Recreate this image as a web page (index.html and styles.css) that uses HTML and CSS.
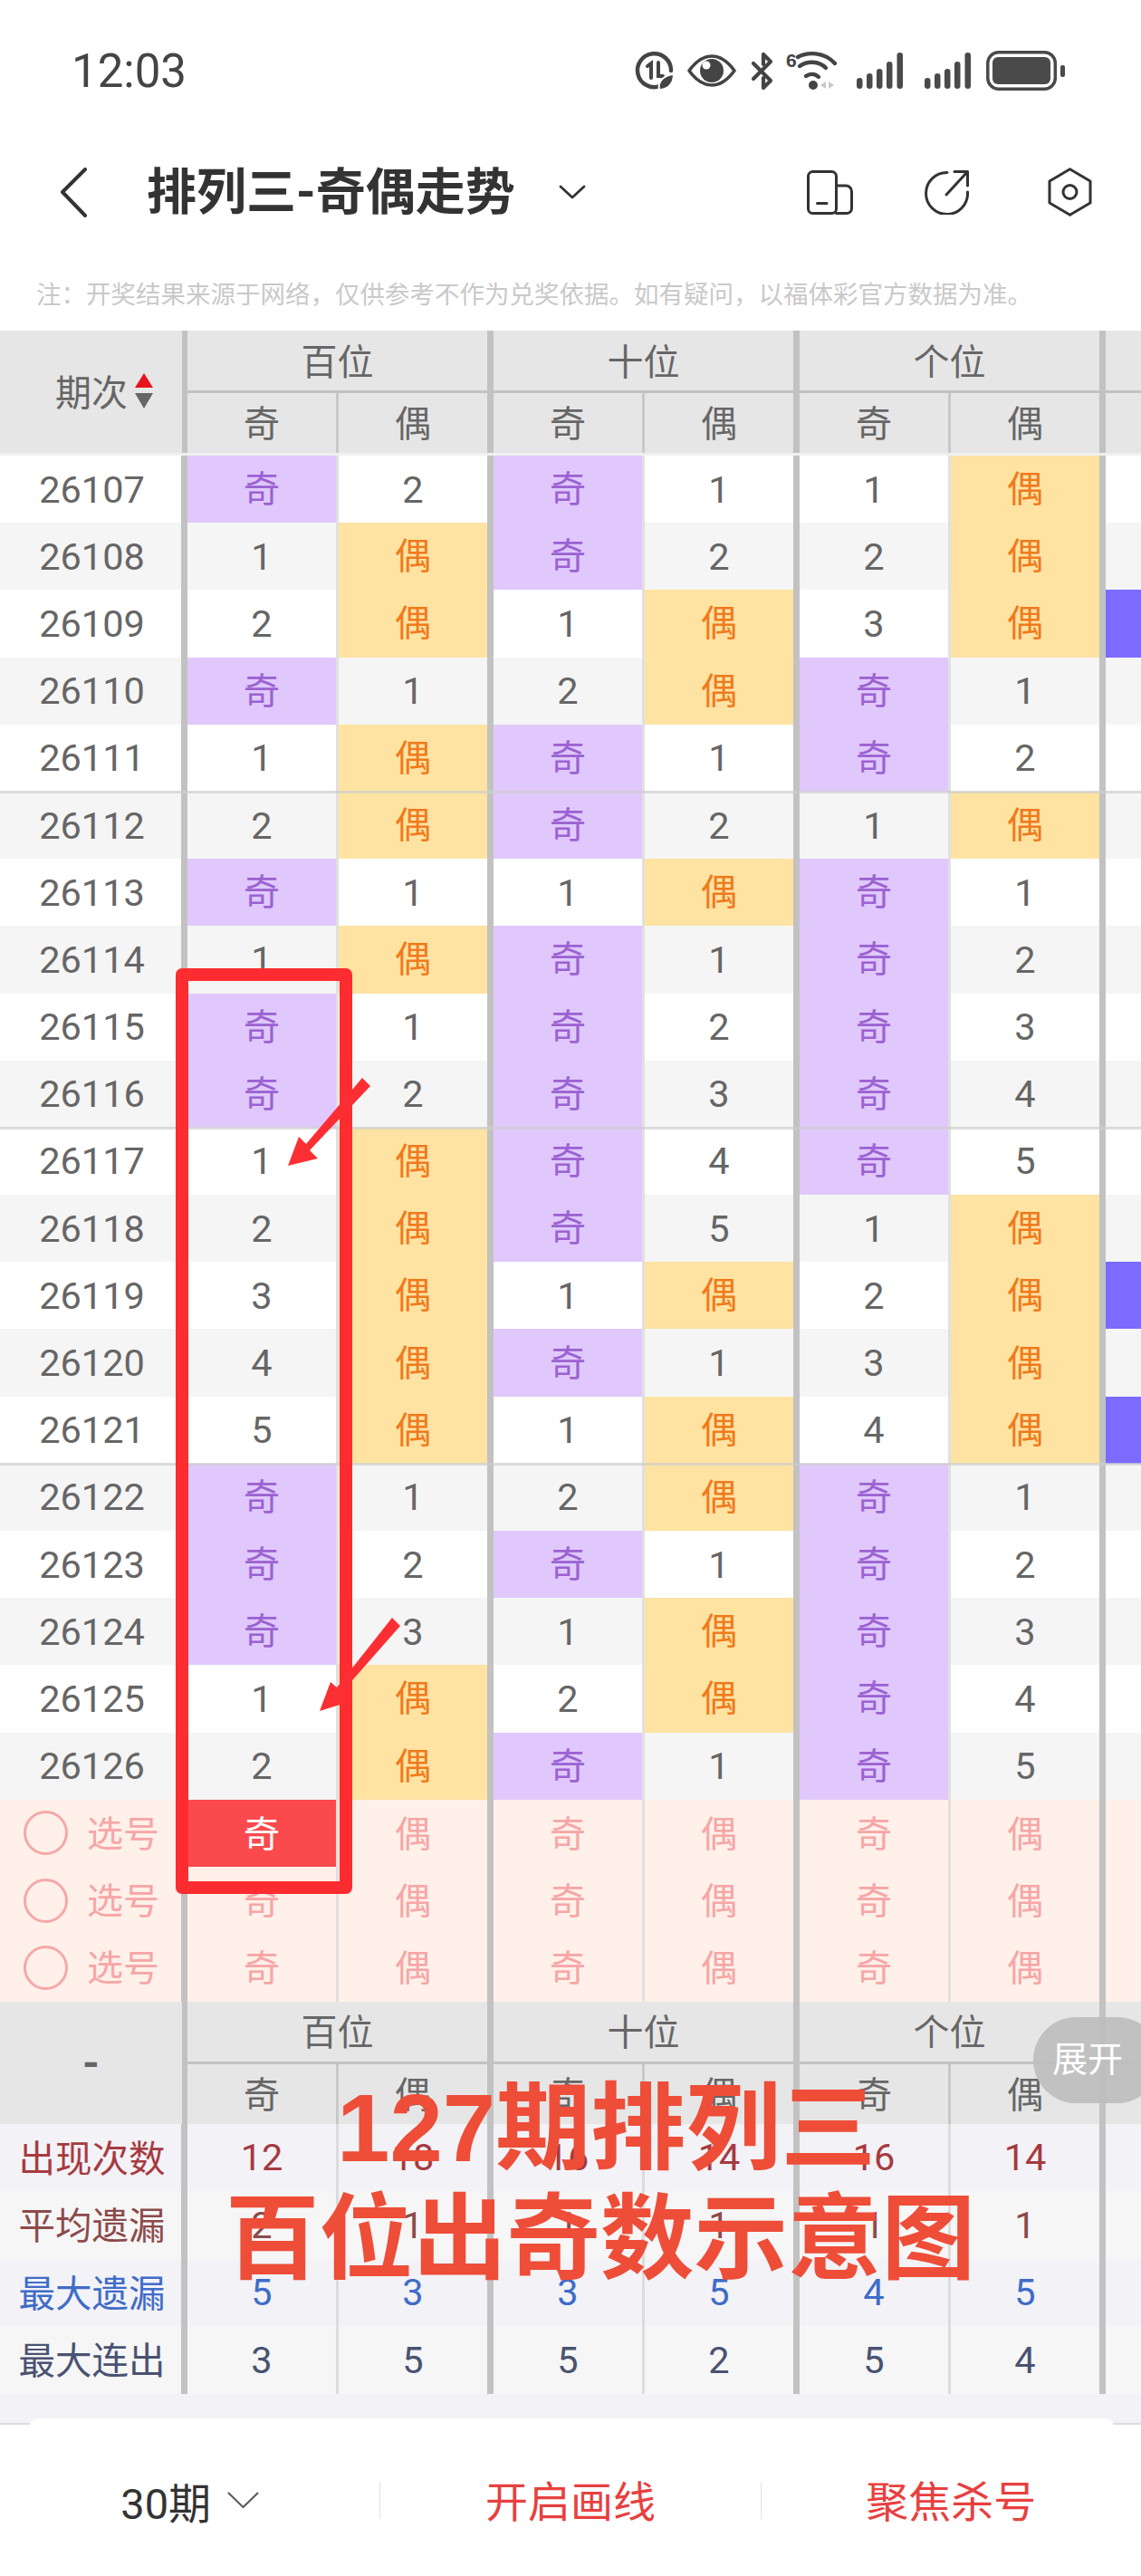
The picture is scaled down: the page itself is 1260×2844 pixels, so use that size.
FILE: index.html
```html
<!DOCTYPE html>
<html lang="zh-CN">
<head>
    <meta charset="UTF-8">
    <meta name="viewport" content="width=device-width, initial-scale=1.0">
    <title>排列三-奇偶走势</title>
    <link rel="stylesheet" href="styles.css">
</head>
<body>
<div class="page">
    <div class="status">
        <span class="time">12:03</span>
        <div class="status-icons">
            <svg class="ic-save" width="42" height="42" viewBox="0 0 42 42" fill="none" stroke="#444" stroke-width="4.5" stroke-linecap="round"><path d="M27 38A18.5 18.5 0 1 1 39 21"/><path d="M13 16l4-3v16" stroke-width="4"/><path d="M25 12v15h5" stroke-width="4"/><path d="M26 42c-2-10 6-16 16-17 0 10-6 17-16 17z" fill="#444" stroke="#fff" stroke-width="2"/></svg>
            <svg class="ic-eye" width="54" height="36" viewBox="0 0 54 36" fill="none"><path d="M2 18C10 7 18 2 27 2s17 5 25 16c-8 11-16 16-25 16S10 29 2 18z" stroke="#444" stroke-width="3.6" stroke-linejoin="round"/><circle cx="27" cy="18" r="13" fill="#444"/><circle cx="21" cy="12" r="4.5" fill="#fff"/></svg>
            <svg class="ic-bt" width="25" height="41" viewBox="0 0 25 41" fill="none" stroke="#444" stroke-width="4.2" stroke-linecap="round" stroke-linejoin="round"><path d="M3 12l19 19-8 8V28"/><path d="M3 29L22 10l-8-8v11"/></svg>
            <svg class="ic-wifi" width="57" height="42" viewBox="0 0 57 42" fill="none"><text x="0" y="17" class="wifi-six">6</text><g stroke="#444" stroke-width="4.4" stroke-linecap="round"><path d="M13 6C24 0 42 0 54 13"/><path d="M15 16c8-6 21-6 29 2"/><path d="M22 27c4-3 10-3 14 1"/></g><circle cx="30" cy="37" r="5" fill="#444"/><path d="M44 33v8l-6-4zM47 33v8l6-4z" fill="#c8c8c8"/></svg>
            <svg class="ic-sig" width="52" height="40" viewBox="0 0 52 40" fill="#4a4a4a"><rect x="0" y="28" width="6.5" height="12" rx="3.2"/><rect x="11" y="23" width="6.5" height="17" rx="3.2"/><rect x="22" y="18" width="6.5" height="22" rx="3.2"/><rect x="33" y="10" width="6.5" height="30" rx="3.2"/><rect x="44.500" y="0" width="6.5" height="40" rx="3.2"/></svg>
            <svg class="ic-sig2" width="52" height="40" viewBox="0 0 52 40" fill="#4a4a4a"><rect x="0" y="28" width="6.5" height="12" rx="3.2"/><rect x="11" y="23" width="6.5" height="17" rx="3.2"/><rect x="22" y="18" width="6.5" height="22" rx="3.2"/><rect x="33" y="10" width="6.5" height="30" rx="3.2"/><rect x="44.500" y="0" width="6.5" height="40" rx="3.2"/></svg>
            <svg class="ic-bat" width="87" height="44" viewBox="0 0 87 44" fill="none"><rect x="1.8" y="1.800" width="74.500" height="40.400" rx="12" stroke="#4a4a4a" stroke-width="3.500"/><rect x="7" y="7" width="64" height="30" rx="6" fill="#4a4a4a"/><rect x="82" y="16" width="5" height="13" rx="2" fill="#4a4a4a"/></svg>
        </div>
    </div>

    <div class="nav">
        <svg class="back" width="30" height="55" viewBox="0 0 30 55" fill="none" stroke="#333" stroke-width="4" stroke-linecap="round" stroke-linejoin="round"><path d="M28 2L3 27l25 26"/></svg>
        <h1 class="title">排列三-奇偶走势</h1>
        <svg class="title-arrow" width="30" height="16" viewBox="0 0 30 16" fill="none" stroke="#333" stroke-width="2.800" stroke-linecap="round" stroke-linejoin="round"><path d="M2 2l13 12L28 2"/></svg>
        <svg class="nav-phone" width="51" height="49" viewBox="0 0 51 49" fill="none" stroke="#333" stroke-width="3" stroke-linecap="round" stroke-linejoin="round"><rect x="1.500" y="1.500" width="31" height="46" rx="5"/><path d="M32.500 17H43a6.500 6.500 0 0 1 6.500 6.500V42a5.500 5.500 0 0 1-5.500 5.500H32.500"/><path d="M11.500 36.500H22"/></svg>
        <svg class="nav-share" width="50" height="50" viewBox="0 0 50 50" fill="none" stroke="#333" stroke-width="3" stroke-linecap="round" stroke-linejoin="round"><path d="M26 3.500A23 23 0 1 0 48.500 25"/><path d="M34 2.500H48.500V18"/><path d="M48 3L25 28"/></svg>
        <svg class="nav-set" width="49" height="54" viewBox="0 0 49 54" fill="none" stroke="#333" stroke-width="3" stroke-linejoin="round"><path d="M24.500 1.800L47 15v24L24.500 52.200 2 39V15z"/><circle cx="24.500" cy="27" r="7.500"/></svg>
    </div>

    <p class="note">注：开奖结果来源于网络，仅供参考不作为兑奖依据。如有疑问，以福体彩官方数据为准。</p>

    <div class="head head-top">
        <div class="head-first"><span>期次</span><svg width="20" height="39" viewBox="0 0 20 39"><path d="M10 0l10 16H0z" fill="#e8141c"/><path d="M0 22h20L10 39z" fill="#666"/></svg></div>
        <div class="grp"><div class="grp-title">百位</div><div class="sub"><span>奇</span><span>偶</span></div></div>
        <div class="grp"><div class="grp-title">十位</div><div class="sub"><span>奇</span><span>偶</span></div></div>
        <div class="grp"><div class="grp-title">个位</div><div class="sub"><span>奇</span><span>偶</span></div></div>
        <div class="grp grp-more"><div class="grp-title"></div><div class="sub"></div></div>
    </div>

    <div class="rows">
        <div class="row"><div class="no">26107</div><div class="o">奇</div><div>2</div><div class="o">奇</div><div>1</div><div>1</div><div class="e">偶</div><div></div></div>
        <div class="row"><div class="no">26108</div><div>1</div><div class="e">偶</div><div class="o">奇</div><div>2</div><div>2</div><div class="e">偶</div><div></div></div>
        <div class="row"><div class="no">26109</div><div>2</div><div class="e">偶</div><div>1</div><div class="e">偶</div><div>3</div><div class="e">偶</div><div class="m"></div></div>
        <div class="row"><div class="no">26110</div><div class="o">奇</div><div>1</div><div>2</div><div class="e">偶</div><div class="o">奇</div><div>1</div><div></div></div>
        <div class="row"><div class="no">26111</div><div>1</div><div class="e">偶</div><div class="o">奇</div><div>1</div><div class="o">奇</div><div>2</div><div></div></div>
        <div class="row line"><div class="no">26112</div><div>2</div><div class="e">偶</div><div class="o">奇</div><div>2</div><div>1</div><div class="e">偶</div><div></div></div>
        <div class="row"><div class="no">26113</div><div class="o">奇</div><div>1</div><div>1</div><div class="e">偶</div><div class="o">奇</div><div>1</div><div></div></div>
        <div class="row"><div class="no">26114</div><div>1</div><div class="e">偶</div><div class="o">奇</div><div>1</div><div class="o">奇</div><div>2</div><div></div></div>
        <div class="row"><div class="no">26115</div><div class="o">奇</div><div>1</div><div class="o">奇</div><div>2</div><div class="o">奇</div><div>3</div><div></div></div>
        <div class="row"><div class="no">26116</div><div class="o">奇</div><div>2</div><div class="o">奇</div><div>3</div><div class="o">奇</div><div>4</div><div></div></div>
        <div class="row line"><div class="no">26117</div><div>1</div><div class="e">偶</div><div class="o">奇</div><div>4</div><div class="o">奇</div><div>5</div><div></div></div>
        <div class="row"><div class="no">26118</div><div>2</div><div class="e">偶</div><div class="o">奇</div><div>5</div><div>1</div><div class="e">偶</div><div></div></div>
        <div class="row"><div class="no">26119</div><div>3</div><div class="e">偶</div><div>1</div><div class="e">偶</div><div>2</div><div class="e">偶</div><div class="m"></div></div>
        <div class="row"><div class="no">26120</div><div>4</div><div class="e">偶</div><div class="o">奇</div><div>1</div><div>3</div><div class="e">偶</div><div></div></div>
        <div class="row"><div class="no">26121</div><div>5</div><div class="e">偶</div><div>1</div><div class="e">偶</div><div>4</div><div class="e">偶</div><div class="m"></div></div>
        <div class="row line"><div class="no">26122</div><div class="o">奇</div><div>1</div><div>2</div><div class="e">偶</div><div class="o">奇</div><div>1</div><div></div></div>
        <div class="row"><div class="no">26123</div><div class="o">奇</div><div>2</div><div class="o">奇</div><div>1</div><div class="o">奇</div><div>2</div><div></div></div>
        <div class="row"><div class="no">26124</div><div class="o">奇</div><div>3</div><div>1</div><div class="e">偶</div><div class="o">奇</div><div>3</div><div></div></div>
        <div class="row"><div class="no">26125</div><div>1</div><div class="e">偶</div><div>2</div><div class="e">偶</div><div class="o">奇</div><div>4</div><div></div></div>
        <div class="row"><div class="no">26126</div><div>2</div><div class="e">偶</div><div class="o">奇</div><div>1</div><div class="o">奇</div><div>5</div><div></div></div>
    </div>

    <div class="picks">
        <div class="row"><div class="pick"><i></i>选号</div><div class="on">奇</div><div>偶</div><div>奇</div><div>偶</div><div>奇</div><div>偶</div><div></div></div>
        <div class="row"><div class="pick"><i></i>选号</div><div>奇</div><div>偶</div><div>奇</div><div>偶</div><div>奇</div><div>偶</div><div></div></div>
        <div class="row"><div class="pick"><i></i>选号</div><div>奇</div><div>偶</div><div>奇</div><div>偶</div><div>奇</div><div>偶</div><div></div></div>
    </div>

    <div class="head head-stat">
        <div class="head-first dash">-</div>
        <div class="grp"><div class="grp-title">百位</div><div class="sub"><span>奇</span><span>偶</span></div></div>
        <div class="grp"><div class="grp-title">十位</div><div class="sub"><span>奇</span><span>偶</span></div></div>
        <div class="grp"><div class="grp-title">个位</div><div class="sub"><span>奇</span><span>偶</span></div></div>
        <div class="grp grp-more"><div class="grp-title"></div><div class="sub"></div></div>
    </div>

    <div class="stats">
        <div class="row s-count"><div class="label">出现次数</div><div>12</div><div>18</div><div>16</div><div>14</div><div>16</div><div>14</div><div></div></div>
        <div class="row s-avg"><div class="label">平均遗漏</div><div>2</div><div>1</div><div>1</div><div>1</div><div>1</div><div>1</div><div></div></div>
        <div class="row s-miss"><div class="label">最大遗漏</div><div>5</div><div>3</div><div>3</div><div>5</div><div>4</div><div>5</div><div></div></div>
        <div class="row s-run"><div class="label">最大连出</div><div>3</div><div>5</div><div>5</div><div>2</div><div>5</div><div>4</div><div></div></div>
    </div>

    <div class="gap"><div class="gap-card"></div></div>

    <div class="bottom">
        <div class="bottom-item period">30期<svg width="35" height="19" viewBox="0 0 35 19" fill="none" stroke="#555" stroke-width="2" stroke-linecap="round" stroke-linejoin="round"><path d="M1.500 1.500L17.500 17 33.500 1.500"/></svg></div>
        <div class="bottom-item action">开启画线</div>
        <div class="bottom-item action">聚焦杀号</div>
    </div>

    <!-- 截图上的标注 -->
    <div class="more-pill">展开</div>
    <div class="mark-box"></div>
    <svg class="mark-arrows" width="1260" height="2844" viewBox="0 0 1260 2844">
        <path d="M400 1190L409 1199 342 1270 351 1279 318 1287 330 1255 338 1263z" fill="#fb2f33"/>
        <path d="M433 1786L442 1795 376 1870 385 1879 353 1889 365 1857 372 1863z" fill="#fb2f33"/>
    </svg>
    <div class="big-note"><div class="big-one">127期排列三</div><div class="big-two">百位出奇数示意图</div></div>
</div>
</body>
</html>
```

FILE: styles.css
```css
* {
    box-sizing: border-box;
}
html, body {
    margin: 0;
    padding: 0;
}
body {
    font-family: Roboto, "Noto Sans CJK SC", sans-serif;
    background: #fff;
    color: #666;
}
.page {
    position: relative;
    width: 1260px;
    height: 2844px;
    overflow: hidden;
}

/* status bar */
.status {
    height: 156px;
    padding: 0 84px 0 79px;
    display: flex;
    align-items: center;
    justify-content: space-between;
}
.time {
    font-size: 51px;
    color: #444;
}
.status-icons {
    display: flex;
    align-items: center;
}
.status-icons svg {
    overflow: visible;
}
.ic-eye { margin-left: 15px; }
.ic-bt { margin-left: 16px; }
.ic-wifi { margin-left: 14px; }
.ic-sig { margin-left: 21px; }
.ic-sig2 { margin-left: 23px; }
.ic-bat { margin-left: 16px; }
.wifi-six {
    font-family: "Liberation Sans", sans-serif;
    font-size: 21px;
    font-weight: 700;
    fill: #444;
}

/* nav */
.nav {
    height: 112px;
    padding: 0 54px 0 66px;
    display: flex;
    align-items: center;
}
.title {
    margin: 0 0 0 66px;
    font-size: 55px;
    line-height: 1;
    font-weight: 700;
    color: #333;
    white-space: nowrap;
}
.title-arrow { margin-left: 48px; }
.nav-phone { margin-left: auto; }
.nav-share { margin-left: 78px; }
.nav-set { margin-left: 87px; }

.note {
    margin: 0;
    height: 97px;
    padding: 44px 0 0 40px;
    font-size: 27.500px;
    line-height: 28px;
    color: #c9c9c9;
    white-space: nowrap;
}

/* table head */
.head {
    display: grid;
    grid-template-columns: 207px 338px 338px 338px 39px;
    background: #e6e6e6;
    font-size: 40px;
    color: #666;
}
.head-top {
    height: 138px;
    border-bottom: 3px solid #f0f0f0;
}
.head-stat {
    height: 135px;
}
.head-first {
    border-right: 6px solid #c2c2c2;
    display: flex;
    align-items: center;
    gap: 8px;
    padding: 0 0 3px 61px;
}
.head-first.dash {
    padding: 0 0 0 91px;
    font-size: 48px;
    font-weight: 700;
}
.grp {
    border-right: 7px solid #c2c2c2;
    display: flex;
    flex-direction: column;
}
.grp-more {
    border-right: 0;
}
.grp-title {
    height: 66px;
    padding-bottom: 3px;
    border-bottom: 3px solid #c2c2c2;
    box-sizing: content-box;
    display: flex;
    align-items: center;
    justify-content: center;
}
.grp-title {
    height: 63px;
}
.sub {
    flex: 1;
    display: flex;
}
.sub span {
    width: 167px;
    padding-bottom: 4px;
    display: flex;
    align-items: center;
    justify-content: center;
}
.sub span:first-child {
    border-right: 3px solid #c8c8c8;
}
.sub span:last-child {
    width: 164px;
}

/* rows */
.row {
    position: relative;
    display: grid;
    grid-template-columns: 207px repeat(3, 167px 171px) 39px;
    height: 74.200px;
    font-size: 41.500px;
    color: #666;
}
.row > div {
    display: flex;
    align-items: center;
    justify-content: center;
}
.row > div:nth-child(2),
.row > div:nth-child(4),
.row > div:nth-child(6) {
    border-right: 3px solid #e0e0e0;
}
.row > div:nth-child(1),
.row > div:nth-child(3),
.row > div:nth-child(5),
.row > div:nth-child(7) {
    border-right: 7px solid #c2c2c2;
}
.rows .row:nth-child(even) {
    background: #f5f5f5;
}
.row.line::after {
    content: "";
    position: absolute;
    left: 0;
    right: 0;
    top: -1px;
    height: 3px;
    background: rgba(205, 205, 205, 0.7);
}
.row .no {
    padding-left: 3px;
}
.row .o {
    background: #e0c8fc;
    color: #9b62d2;
    font-size: 40px;
    padding-bottom: 6px;
}
.row .e {
    background: #fee3a2;
    color: #f07a1c;
    font-size: 40px;
    padding-bottom: 6px;
}
.row .m {
    background: #7b6bff;
}

/* pick rows */
.picks {
    background: #fff0e9;
    color: #f6a6a6;
}
.picks .row {
    height: 74.300px;
    color: #f6a6a6;
    font-size: 40px;
}
.picks .row > div {
    padding-bottom: 4px;
}
.row .pick {
    justify-content: flex-start;
    padding-left: 26px;
    gap: 21px;
}
.pick i {
    width: 49px;
    height: 49px;
    margin-top: 4px;
    border: 3px solid #f5a8a8;
    border-radius: 50%;
}
.row .on {
    background: #fb4a4e;
    color: #fff;
}

/* stats */
.stats .row {
    height: 74.500px;
}
.stats .row > div:nth-child(2),
.stats .row > div:nth-child(4),
.stats .row > div:nth-child(6) {
    border-right-color: #dcdcdc;
}
.stats .row .label {
    padding: 0 0 3px 3px;
    font-size: 40.500px;
}
.s-count {
    background: #f2f2f7;
    color: #a63a40;
}
.s-avg {
    background: #f6f6f6;
    color: #8c4a4a;
}
.s-miss {
    background: #f2f2f7;
    color: #3f6cc8;
}
.s-run {
    background: #f6f6f6;
    color: #4a5272;
}

.gap {
    height: 34px;
    padding: 27px 30px 0 32px;
    background: #f2f2f7;
    border-bottom: 2px solid #dcdcdc;
}
.gap-card {
    height: 10px;
    background: #fff;
    border-radius: 12px 12px 0 0;
}

/* bottom bar */
.bottom {
    height: 167px;
    display: flex;
    align-items: center;
    background: #fff;
}
.bottom-item {
    flex: 1;
    height: 41px;
    display: flex;
    align-items: center;
    justify-content: center;
    font-size: 47px;
}
.bottom-item + .bottom-item {
    border-left: 1px solid #e2e2e2;
}
.period {
    color: #333;
    gap: 18px;
}
.action {
    color: #e8403f;
    padding-bottom: 4px;
}

/* overlays */
.more-pill {
    position: absolute;
    left: 1141px;
    top: 2227px;
    width: 140px;
    height: 95px;
    padding-left: 21px;
    border-radius: 48px;
    background: rgba(190, 190, 190, 0.92);
    color: #fff;
    font-size: 39px;
    line-height: 95px;
}
.mark-box {
    position: absolute;
    left: 194px;
    top: 1069px;
    width: 195px;
    height: 1022px;
    border: 14px solid #fd2c30;
    border-radius: 7px;
}
.mark-arrows {
    position: absolute;
    left: 0;
    top: 0;
    pointer-events: none;
}
.big-note {
    position: absolute;
    left: 0;
    top: 2297px;
    width: 1260px;
    color: #ee4d38;
    font-weight: 700;
    line-height: 1;
    white-space: nowrap;
}
.big-one {
    font-size: 105px;
    padding-left: 372px;
    height: 124px;
    font-family: "Liberation Sans", "Noto Sans CJK SC", sans-serif;
}
.big-two {
    font-size: 103.500px;
    padding-left: 249px;
}
```
